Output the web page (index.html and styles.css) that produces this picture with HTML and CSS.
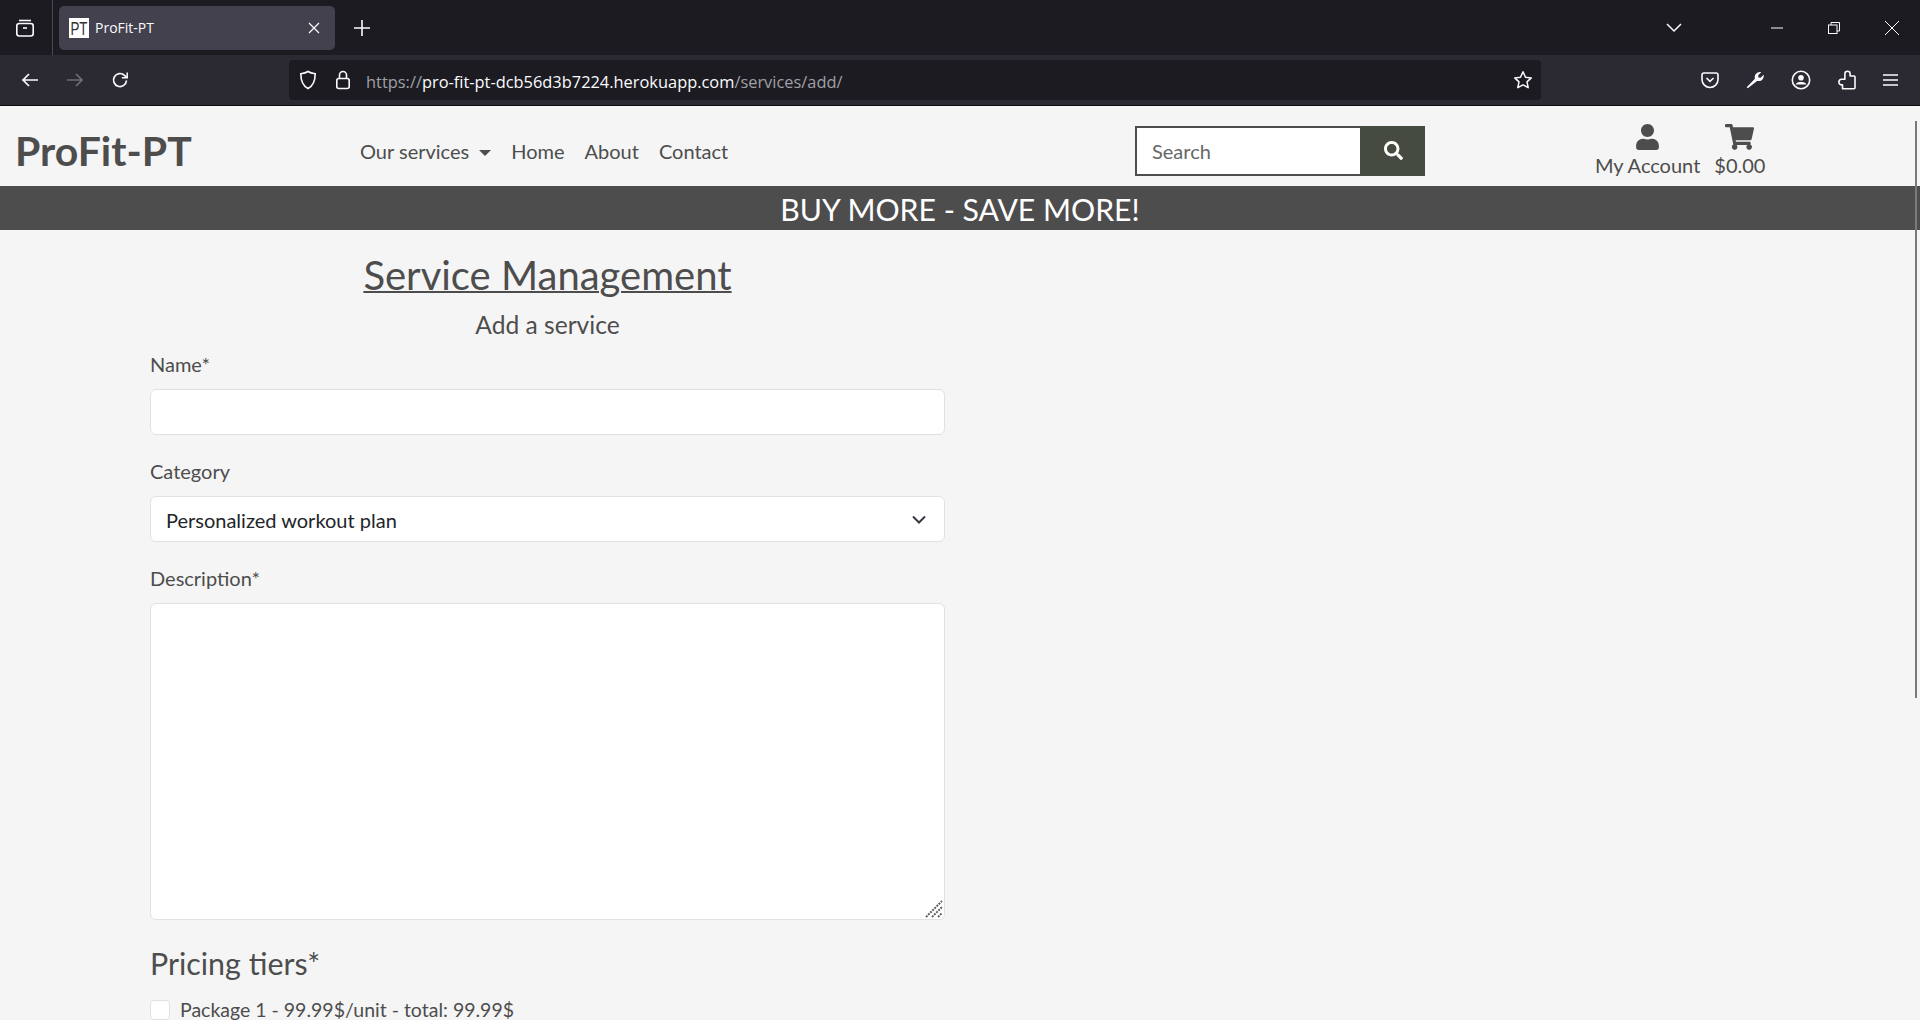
FILE: index.html
```html
<!DOCTYPE html>
<html lang="en">
<head>
  <meta charset="UTF-8">
  <title>ProFit-PT</title>
  <link rel="stylesheet" href="styles.css">
</head>
<body>
  <div class="tabbar">
    <div class="tab-list-btn">
      <svg width="20" height="20" viewBox="0 0 20 20" fill="none" stroke="#fbfbfe" stroke-width="1.6"><path d="M4 2.5h12"/><rect x="1.8" y="5.5" width="16.4" height="12.5" rx="2.5"/><path d="M8 10h4"/></svg>
    </div>
    <div class="tab">
      <span class="favicon"><span class="favicon-text">PT</span></span>
      <span class="tab-title">ProFit-PT</span>
      <svg class="tab-close" width="12" height="12" viewBox="0 0 12 12" stroke="#fbfbfe" stroke-width="1.2"><path d="M1 1l10 10M11 1L1 11"/></svg>
    </div>
    <svg class="new-tab" width="16" height="16" viewBox="0 0 16 16" stroke="#fbfbfe" stroke-width="1.6"><path d="M8 0v16M0 8h16"/></svg>
    <div class="tabbar-right">
      <svg class="all-tabs" width="16" height="10" viewBox="0 0 16 10" fill="none" stroke="#fbfbfe" stroke-width="1.5"><path d="M1 1l7 7 7-7"/></svg>
      <svg class="win-btn" width="12" height="12" viewBox="0 0 12 12" stroke="#fbfbfe" stroke-width="1"><path d="M0 6h12"/></svg>
      <svg class="win-btn" width="12" height="12" viewBox="0 0 12 12" fill="none" stroke="#fbfbfe" stroke-width="1"><rect x=".5" y="3" width="8.5" height="8.5"/><path d="M3 3V.5h8.500V9H9"/></svg>
      <svg class="win-btn" width="14" height="14" viewBox="0 0 14 14" stroke="#fbfbfe" stroke-width="1"><path d="M0 0l14 14M14 0L0 14"/></svg>
    </div>
  </div>

  <div class="toolbar">
    <div class="nav-btns">
      <svg width="18" height="16" viewBox="0 0 18 16" fill="none" stroke="#fbfbfe" stroke-width="1.7"><path d="M17 8H2M8 2L2 8l6 6"/></svg>
      <svg width="18" height="16" viewBox="0 0 18 16" fill="none" stroke="#6f6e75" stroke-width="1.7"><path d="M1 8h15M10 2l6 6-6 6"/></svg>
      <svg width="18" height="18" viewBox="0 0 18 18" fill="none" stroke="#fbfbfe" stroke-width="1.7"><path d="M15.500 9.500A6.500 6.500 0 1 1 13.500 4.300L16 6.500"/><path d="M16.200 1.500v5.300h-5.300" stroke-width="1.500"/></svg>
    </div>
    <div class="urlbar">
      <svg class="shield" width="18" height="20" viewBox="0 0 18 20" fill="none" stroke="#fbfbfe" stroke-width="1.6"><path d="M9 1.500c2 1.500 4.500 2 7.200 2.200 0 6.500-1.500 11.800-7.200 14.800C3.300 15.500 1.800 10.200 1.800 3.700 4.500 3.500 7 3 9 1.500z"/></svg>
      <svg class="lock" width="16" height="20" viewBox="0 0 16 20" fill="none" stroke="#fbfbfe" stroke-width="1.6"><rect x="1.800" y="8.500" width="12.400" height="10" rx="2"/><path d="M4.500 8.500V5a3.500 3.500 0 0 1 7 0v3.500"/></svg>
      <span class="url"><span class="url-dim">https://</span>pro-fit-pt-dcb56d3b7224.herokuapp.com<span class="url-dim">/services/add/</span></span>
      <svg class="star" width="20" height="20" viewBox="0 0 20 20" fill="none" stroke="#fbfbfe" stroke-width="1.500" stroke-linejoin="round"><path d="M10 1.800l2.500 5.400 5.800.7-4.300 4 1.200 5.800-5.200-2.900-5.200 2.900L6 11.900l-4.300-4 5.800-.7z"/></svg>
    </div>
    <div class="tools">
      <svg width="18" height="17" viewBox="0 0 18 17" fill="none" stroke="#fbfbfe" stroke-width="1.600"><path d="M1 3a2 2 0 0 1 2-2h12a2 2 0 0 1 2 2v4.500A8 8 0 0 1 1 7.500z"/><path d="M5.500 6L9 9.300 12.500 6"/></svg>
      <svg width="18" height="18" viewBox="0 0 18 18" fill="#fbfbfe"><path d="M1.800 17.300L.7 16.200l8.200-8.400c-.6-2.500.2-4.700 2.300-6 1.200-.8 2.700-1 4-.6l-3 3 .2 2.200 2.200.3 3-3c.4 1.500.1 3-.8 4.200-1.400 1.900-3.500 2.600-5.700 2z"/></svg>
      <svg width="20" height="20" viewBox="0 0 20 20" fill="none" stroke="#fbfbfe" stroke-width="1.600"><circle cx="10" cy="10" r="8.700"/><circle cx="10" cy="7.800" r="2.800" fill="#fbfbfe" stroke="none"/><path d="M4.500 14.500c1-2 3-2.500 5.500-2.500s4.500.5 5.500 2.500" fill="#fbfbfe" stroke="none"/></svg>
      <svg width="18" height="20" viewBox="0 0 18 20" fill="none" stroke="#fbfbfe" stroke-width="1.600" stroke-linejoin="round"><path d="M9.500 1.200a2.600 2.600 0 0 1 2.600 2.600V6h3.900a1 1 0 0 1 1 1v10.800a1 1 0 0 1-1 1H4.500v-3.900h-.8a2.800 2.800 0 0 1 0-5.600h3.200V3.800a2.600 2.600 0 0 1 2.600-2.600z"/></svg>
      <svg width="15" height="14" viewBox="0 0 15 14" stroke="#fbfbfe" stroke-width="1.600"><path d="M0 2h15M0 7h15M0 12h15"/></svg>
    </div>
  </div>

  <div class="page">
    <header class="site-header">
      <a class="logo">ProFit-PT</a>
      <nav class="main-nav">
        <a class="nav-link">Our services<span class="caret"></span></a>
        <a class="nav-link">Home</a>
        <a class="nav-link">About</a>
        <a class="nav-link">Contact</a>
      </nav>
      <form class="search">
        <input class="search-input" type="text" placeholder="Search">
        <span class="search-btn">
          <svg width="19" height="19" viewBox="0 0 512 512" fill="#fff"><path d="M505 442.700L405.300 343c-4.500-4.500-10.600-7-17-7H372c27.600-35.300 44-79.700 44-128C416 93.100 322.900 0 208 0S0 93.100 0 208s93.100 208 208 208c48.300 0 92.700-16.400 128-44v16.300c0 6.400 2.500 12.500 7 17l99.700 99.700c9.400 9.400 24.600 9.400 33.900 0l28.300-28.300c9.400-9.400 9.400-24.600.1-34zM208 336c-70.700 0-128-57.200-128-128 0-70.700 57.200-128 128-128 70.700 0 128 57.200 128 128 0 70.700-57.200 128-128 128z"/></svg>
        </span>
      </form>
      <div class="account">
        <a class="account-link">
          <svg width="23" height="26" viewBox="0 0 448 512" fill="#4d4d4d"><path d="M224 256c70.700 0 128-57.300 128-128S294.700 0 224 0 96 57.300 96 128s57.300 128 128 128zm89.600 32h-16.700c-22.200 10.200-46.900 16-72.900 16s-50.600-5.800-72.900-16h-16.700C60.200 288 0 348.200 0 422.400V464c0 26.500 21.500 48 48 48h352c26.500 0 48-21.500 48-48v-41.600c0-74.200-60.200-134.400-134.400-134.400z"/></svg>
          <span>My Account</span>
        </a>
        <a class="account-link">
          <svg width="29" height="26" viewBox="0 0 576 512" fill="#4d4d4d"><path d="M528.120 301.319l47.273-208C578.806 78.301 567.391 64 551.990 64H159.208l-9.166-44.810C147.758 8.021 137.930 0 126.529 0H24C10.745 0 0 10.745 0 24v16c0 13.255 10.745 24 24 24h69.883l70.248 343.435C147.325 417.100 136 435.222 136 456c0 30.928 25.072 56 56 56s56-25.072 56-56c0-15.674-6.447-29.835-16.824-40h209.647C430.447 426.165 424 440.326 424 456c0 30.928 25.072 56 56 56s56-25.072 56-56c0-22.172-12.888-41.332-31.579-50.405l5.517-24.276c3.413-15.018-8.002-29.319-23.403-29.319H218.117l-6.545-32h293.145c11.206 0 20.920-7.754 23.403-18.681z"/></svg>
          <span>$0.00</span>
        </a>
      </div>
    </header>

    <div class="banner">BUY MORE - SAVE MORE!</div>

    <main class="form-col">
      <h1 class="page-title">Service Management</h1>
      <h2 class="page-sub">Add a service</h2>
      <form class="service-form">
        <div class="field">
          <label class="field-label">Name*</label>
          <input class="control" type="text">
        </div>
        <div class="field">
          <label class="field-label">Category</label>
          <div class="control select-box">
            <span>Personalized workout plan</span>
            <svg width="14" height="9" viewBox="0 0 14 9" fill="none" stroke="#343a40" stroke-width="2"><path d="M1 1.500l6 6 6-6"/></svg>
          </div>
        </div>
        <div class="field">
          <label class="field-label">Description*</label>
          <div class="area-wrap">
            <textarea class="control text-area"></textarea>
            <svg class="grip" width="18" height="18" viewBox="0 0 18 18" stroke="#5f5f5f" stroke-width="2" stroke-dasharray="2 1"><path d="M1 17L17 1M7 17L17 7M13 17l4-4"/></svg>
          </div>
        </div>
        <h3 class="tiers-title">Pricing tiers*</h3>
        <label class="tier"><span class="tier-check"></span>Package 1 - 99.99$/unit - total: 99.99$</label>
      </form>
    </main>

    <div class="scroll-thumb"></div>
  </div>
</body>
</html>
```

FILE: styles.css
```css
* {
  box-sizing: border-box;
}
html, body {
  margin: 0;
  height: 1020px;
  overflow: hidden;
}
body {
  font-family: Lato, sans-serif;
  background: #f5f5f5;
  color: #4d4d4d;
}

/* browser chrome */
.tabbar {
  height: 55px;
  background: #1c1b22;
  display: flex;
  align-items: center;
}
.tab-list-btn {
  width: 53px;
  height: 55px;
  padding-left: 15px;
  display: flex;
  align-items: center;
  border-right: 1px solid #4a4950;
}
.tab {
  width: 276px;
  height: 44px;
  margin-left: 6px;
  padding: 0 15px 0 10px;
  background: #42414d;
  border-radius: 5px;
  display: flex;
  align-items: center;
  color: #fbfbfe;
  font: 14px "Open Sans", sans-serif;
}
.favicon {
  width: 20px;
  height: 20px;
  background: #fff;
  color: #333;
  display: flex;
  align-items: center;
  justify-content: center;
}
.favicon-text {
  font: 14px/14px "Liberation Sans", sans-serif;
  transform: scale(.95, 1.3);
}
.tab-title {
  margin-left: 6px;
  flex: 1;
}
.new-tab {
  margin-left: 19px;
}
.tabbar-right {
  margin-left: auto;
  display: flex;
  align-items: center;
}
.all-tabs {
  margin-right: 89px;
}
.win-btn {
  margin-right: 45px;
}
.win-btn:last-child {
  margin-right: 21px;
}
.toolbar {
  height: 51px;
  background: #2b2a33;
  border-bottom: 1px solid #0c0c0d;
  display: flex;
  align-items: center;
}
.nav-btns {
  width: 289px;
  padding-left: 21px;
  display: flex;
  align-items: center;
  gap: 27px;
}
.urlbar {
  width: 1252px;
  height: 40px;
  background: #1c1b22;
  border-radius: 4px;
  display: flex;
  align-items: center;
  padding: 0 8px 0 10px;
  color: #fbfbfe;
  font: 16.400px "Open Sans", sans-serif;
}
.lock {
  margin-left: 18px;
}
.url {
  margin-left: 15px;
  flex: 1;
  padding-top: 3px;
}
.url-dim {
  color: #a0a0a6;
}
.tools {
  margin-left: 160px;
  display: flex;
  align-items: center;
  gap: 27px;
}

/* site header */
.page {
  position: relative;
  height: 914px;
  overflow: hidden;
}
.site-header {
  height: 80px;
  display: flex;
  align-items: center;
  padding: 9px 0 0 15px;
}
.logo {
  width: 345px;
  font-size: 41px;
  font-weight: 700;
}
.main-nav {
  width: 775px;
  display: flex;
  font-size: 20px;
}
.nav-link {
  margin-right: 20px;
}
.caret {
  display: inline-block;
  margin-left: 10px;
  vertical-align: 3px;
  border-top: 6px solid #4d4d4d;
  border-left: 6px solid transparent;
  border-right: 6px solid transparent;
}
.search {
  width: 290px;
  height: 50px;
  display: flex;
  border: 2px solid #4d4d4d;
  margin: 0;
}
.search-input {
  flex: 1;
  min-width: 0;
  border: 0;
  outline: 0;
  padding: 0 15px;
  font: 20px Lato, sans-serif;
  background: #fff;
}
.search-input::placeholder {
  color: #666;
  opacity: 1;
}
.search-btn {
  width: 65px;
  margin: -2px -2px -2px 0;
  padding-left: 1px;
  background: #454b40;
  display: flex;
  align-items: center;
  justify-content: center;
}
.account {
  margin-left: 170px;
  display: flex;
  gap: 14px;
  font-size: 20px;
}
.account-link {
  display: flex;
  flex-direction: column;
  align-items: center;
  gap: 3px;
}

.banner {
  height: 44px;
  background: #4d4d4d;
  color: #fff;
  font-size: 30.200px;
  line-height: 46px;
  text-align: center;
}

/* form */
.form-col {
  width: 795px;
  margin-left: 150px;
}
.page-title {
  margin: 21px 0 0;
  font-size: 40px;
  font-weight: 400;
  line-height: 48px;
  text-align: center;
  text-decoration: underline;
  text-decoration-thickness: 2px;
}
.page-sub {
  margin: 11px 0 0;
  font-size: 24.600px;
  font-weight: 400;
  line-height: 29px;
  text-align: center;
}
.service-form {
  margin-top: 10px;
}
.field {
  margin-bottom: 21px;
}
.field-label {
  display: block;
  margin-bottom: 10px;
  font-size: 20px;
  line-height: 30px;
}
.control {
  display: block;
  width: 100%;
  height: 46px;
  background: #fff;
  border: 1px solid #dee2e6;
  border-radius: 6px;
  outline: 0;
}
.select-box {
  padding: 1px 18px 0 15px;
  display: flex;
  align-items: center;
  justify-content: space-between;
  color: #212529;
  font-size: 20px;
}
.area-wrap {
  position: relative;
}
.text-area {
  height: 317px;
  resize: none;
}
.grip {
  position: absolute;
  right: 2px;
  bottom: 2px;
}
.tiers-title {
  margin: 24px 0 16px;
  font-size: 30.400px;
  font-weight: 400;
  line-height: 38px;
}
.tier {
  display: flex;
  align-items: center;
  font-size: 19.500px;
}
.tier-check {
  width: 20px;
  height: 20px;
  margin-right: 10px;
  background: #fff;
  border: 1px solid #dee2e6;
  border-radius: 4px;
}

.scroll-thumb {
  position: absolute;
  right: 3px;
  top: 15px;
  width: 2px;
  height: 577px;
  background: #7a7a7a;
}
```
